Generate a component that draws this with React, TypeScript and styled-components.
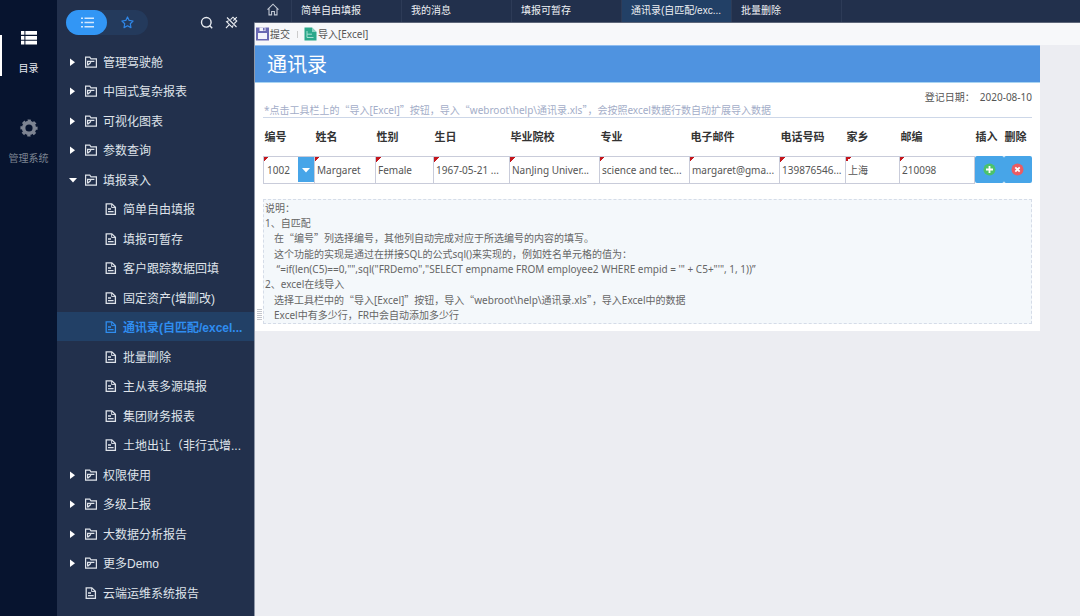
import React from 'react';
import styled, { createGlobalStyle, css } from 'styled-components';

const cjk = '"Noto Sans CJK SC"';

const GlobalStyle = createGlobalStyle`
  *, *::before, *::after { box-sizing: border-box; }
  body {
    margin: 0;
    background: #ecedf2;
    font-family: "Noto Sans", ${cjk}, sans-serif;
    font-size: 10px;
    color: #555;
  }
  button, input, select { font: inherit; color: inherit; margin: 0; padding: 0; border: 0; background: none; }
  ul, p, h1 { margin: 0; padding: 0; }
  ul { list-style: none; }
  a { color: inherit; text-decoration: none; }
  svg { display: block; flex: none; }
`;

const Shell = styled.div`
  display: flex;
  min-height: 100vh;
`;

const Rail = styled.nav`
  flex: none;
  width: 57px;
  padding-top: 28px;
  background: #07142f;
  display: flex;
  flex-direction: column;
  gap: 37px;
`;

const RailButton = styled.button<{ $active?: boolean }>`
  display: flex;
  flex-direction: column;
  align-items: center;
  gap: 13px;
  height: 53px;
  padding-top: 1px;
  line-height: 16px;
  color: ${p => (p.$active ? '#e6e9ef' : '#7d8492')};
  border-left: 2px solid transparent;
  border-right: 2px solid transparent;
  ${p => p.$active && css`
    background: linear-gradient(#fff, #fff) left 7px / 2px 41px no-repeat border-box;
  `}
`;

const Sidebar = styled.aside`
  flex: none;
  width: 197px;
  background: #22304c;
  font-family: "Liberation Sans", ${cjk}, sans-serif;
  color: #dfe3ea;
`;

const SidebarHead = styled.div`
  display: flex;
  align-items: center;
  padding: 10px 16px 0 9px;
  height: 35px;
`;

const Switcher = styled.div`
  display: flex;
  width: 82px;
  height: 25px;
  border-radius: 13px;
  background: #243a5c;
  margin-right: auto;
`;

const SwitchButton = styled.button<{ $active?: boolean }>`
  flex: 1;
  display: flex;
  align-items: center;
  justify-content: center;
  border-radius: 13px;
  color: ${p => (p.$active ? '#d5e8fd' : '#2f86e6')};
  background: ${p => (p.$active ? '#3296f5' : 'transparent')};
`;

const IconButton = styled.button`
  margin-left: 12px;
  color: #e8ebf0;
`;

const Tree = styled.ul`
  padding-top: 12px;
`;

const TreeItem = styled.li`
  &:nth-child(even) { margin-bottom: 1px; }
`;

const TreeLink = styled.a<{ $child?: boolean; $active?: boolean }>`
  display: flex;
  align-items: center;
  height: 29px;
  padding-left: ${p => (p.$child ? 48 : 12)}px;
  font-size: 12px;
  white-space: nowrap;
  ${p => p.$active && css`
    background: #224066;
    color: #2f8df0;
    font-weight: bold;
  `}
`;

const ArrowSlot = styled.span`
  width: 16px;
`;

const TreeLabel = styled.span`
  margin-left: 6px;
`;

const Main = styled.main`
  flex: 1;
  min-width: 0;
  border-left: 1px solid #8f98a9;
  position: relative;
`;

const TabBar = styled.nav`
  display: flex;
  height: 23px;
  margin-left: -1px;
  background: #22304c;
  border-bottom: 1px solid #5d6679;
  font-family: "Liberation Sans", ${cjk}, sans-serif;
  color: #eef0f4;
`;

const Tab = styled.a<{ $active?: boolean; $home?: boolean }>`
  display: flex;
  align-items: center;
  justify-content: ${p => (p.$home ? 'center' : 'flex-start')};
  width: ${p => (p.$home ? 38 : 110)}px;
  padding: 0 0 3px ${p => (p.$home ? 0 : 9)}px;
  white-space: nowrap;
  border-right: 1px solid #2d3b57;
  background: ${p => (p.$active ? '#224066' : 'transparent')};
`;

const Toolbar = styled.div`
  display: flex;
  align-items: center;
  height: 22px;
  padding-left: 1px;
  background: #f7f8fa;
`;

const ToolButton = styled.button`
  display: flex;
  align-items: center;
  gap: 1px;
  line-height: 14px;
`;

const ToolDivider = styled.span`
  width: 1px;
  height: 7px;
  margin: 0 6px 0 7px;
  background: #ccc;
`;

const Sheet = styled.section`
  max-width: 785px;
  padding-bottom: 7px;
  background: #fff;
`;

const Title = styled.h1`
  height: 38px;
  padding-left: 12px;
  background: #4f93e0;
  border-top: 1px solid #8fbdf0;
  border-bottom: 1px solid #a9d4f2;
  color: #fff;
  font-size: 20px;
  font-weight: normal;
  line-height: 38px;
`;

const Body = styled.div`
  padding: 7px 8px 0;
`;

const DateLine = styled.p`
  display: flex;
  justify-content: flex-end;
  gap: 5px;
  line-height: 14px;
`;

const Hint = styled.p`
  height: 14px;
  padding-left: 1px;
  border-bottom: 1px solid #cdd7e8;
  line-height: 13px;
  color: #a3adc8;
  white-space: nowrap;
`;

const Cjk = styled.span`
  font-family: ${cjk}, sans-serif;
  line-height: 1;
`;

const Grid = styled.table`
  width: calc(100% - 1px);
  table-layout: fixed;
  border-collapse: collapse;

  th {
    height: 38px;
    padding: 0 0 0 1px;
    font-size: 11px;
    line-height: 16px;
    color: #333;
    text-align: left;
    white-space: nowrap;
  }
`;

const Cell = styled.td`
  height: 27px;
  padding: 0;
  border: 1px solid #c9ccda;
  background: linear-gradient(135deg, #c4161c 50%, transparent 50%) left top / 5px 5px no-repeat;
`;

const ActionCell = styled.td`
  padding: 0;
`;

const Field = styled.input`
  display: block;
  width: 100%;
  height: 25px;
  padding-left: 2px;
`;

const SelectBox = styled.label`
  display: grid;
  grid-template-columns: 1fr 16px;
`;

const Select = styled.select`
  grid-area: 1 / 1 / 2 / 3;
  appearance: none;
  height: 25px;
  padding-left: 3px;
`;

const SelectArrow = styled.span`
  grid-area: 1 / 2;
  display: flex;
  align-items: center;
  justify-content: center;
  background: #47a5e8;
  pointer-events: none;
`;

const ActionButton = styled.button`
  display: flex;
  align-items: center;
  justify-content: center;
  width: 100%;
  height: 27px;
  border-radius: 2px;
  background: #47a5e8;
`;

const Notes = styled.div`
  margin-top: 15px;
  padding: 1px 1px 0;
  height: 125px;
  border: 1px dashed #d5dce8;
  background: #f4f8fb;
  line-height: 15px;
  color: #666;
  white-space: pre;
`;

const NoteGroup = styled.div`
  margin-bottom: 1px;
`;

const NoteLine = styled.p<{ $indent?: boolean }>`
  height: 15px;
  padding-left: ${p => (p.$indent ? 9 : 0)}px;
`;

const Grip = styled.div`
  position: absolute;
  left: 2px;
  top: 309px;
  width: 5px;
  height: 11px;
  background: repeating-linear-gradient(#c3c6cc 0 1px, transparent 1px 2px);
`;

const ListIcon = () => (
  <svg width="14" height="11" viewBox="0 0 14 11" fill="currentColor">
    <path d="M1 .5h2v1.500H1zM4.500 .5H14v1.500H4.500zM1 4.700h2v1.500H1zM4.500 4.700H14v1.500H4.500zM1 9h2v1.500H1zM4.500 9H14v1.500H4.500z" />
  </svg>
);

const CatalogIcon = () => (
  <svg width="18" height="18" viewBox="0 0 18 18" fill="#fff">
    <path d="M1 2h3.4v3.8H1zM5.4 2H17v3.8H5.4zM1 6.9h3.4v3.8H1zM5.4 6.9H17v3.8H5.4zM1 11.8h3.4v3.8H1zM5.4 11.8H17v3.8H5.4z" />
  </svg>
);

const GearIcon = () => (
  <svg width="18" height="18" viewBox="0 0 18 18" fill="none" stroke="#7d8492">
    <circle cx="9" cy="9" r="5.4" strokeWidth="3.6" />
    <circle cx="9" cy="9" r="7.6" strokeWidth="2" strokeDasharray="3.3 2.67" strokeDashoffset="1.6" />
  </svg>
);

const StarIcon = () => (
  <svg width="13" height="13" viewBox="0 0 14 14" fill="none" stroke="currentColor" strokeWidth="1.3" strokeLinejoin="round">
    <path d="M7 1l1.8 3.8 4.2.6-3 2.9.7 4.2L7 10.5l-3.7 2 .7-4.2-3-2.9 4.2-.6z" />
  </svg>
);

const SearchIcon = () => (
  <svg width="13" height="13" viewBox="0 0 13 13" fill="none" stroke="currentColor" strokeWidth="1.4">
    <circle cx="6.3" cy="6.3" r="4.8" />
    <path d="M9.6 9.6l2.6 2.6" />
  </svg>
);

const UnpinIcon = () => (
  <svg width="13" height="13" viewBox="0 0 13 13" fill="none" stroke="currentColor" strokeWidth="1.1">
    <path d="M2 1.5l9.5 9.5M5.5 3.7L8 1.2l3.8 3.8-2.5 2.5M3.7 4.8L1.6 5.7l5.7 5.7.9-2.1M4.3 8.7L1 12M8.3 4.7l3.5-3.5" />
  </svg>
);

const FolderIcon = () => (
  <svg width="12" height="12" viewBox="0 0 12 12" fill="none" stroke="currentColor" strokeWidth="1.2">
    <path d="M.6 11.2V1.2h4.2l1.2 1.6h5.4v8.4zM2.600 9.500V5.4h3M5.6 5.4h3.8M3 9l3-2.8" />
  </svg>
);

const FileIcon = () => (
  <svg width="12" height="12" viewBox="0 0 12 12" fill="none" stroke="currentColor" strokeWidth="1.3">
    <path d="M1.2 .8h5.6l3.6 3.5v7H1.2zM3 6h3M3 8.7h5.6" />
    <path d="M6.6 1v3.5h3.6" strokeWidth=".9" />
  </svg>
);

const HomeIcon = () => (
  <svg width="12" height="13" viewBox="0 0 12 13" fill="none" stroke="#c3c9d4" strokeWidth="1.1">
    <path d="M.5 6.6L6 1.2l5.5 5.4M2 5.5v6.4h2.6V8.5h2.8v3.4H10V5.5" />
  </svg>
);

const Caret = ({ open }: { open?: boolean }) => (
  <svg width="8" height="8" viewBox="0 0 8 8" fill="#fff">
    <path d={open ? 'M0 2h8L4 6.5z' : 'M1 .5v7.500L6 4.200z'} />
  </svg>
);

const SaveIcon = () => (
  <svg width="13" height="14" viewBox="0 0 13 14">
    <path d="M0 .5h13v13H0z" fill="#6a69b3" />
    <path d="M2 6h9v6H2z" fill="#f4f4fb" />
    <path d="M3.5.5h6v3.500h-6z" fill="#f4f4fb" />
    <path d="M7 1h1.6v2.5H7z" fill="#6a69b3" />
  </svg>
);

const ExcelIcon = () => (
  <svg width="13" height="14" viewBox="0 0 13 14">
    <path d="M.5.5H8L12.5 5v8.5H.5z" fill="#2ba88a" />
    <path d="M8 .5V5h4.5z" fill="#8fd3c2" />
    <path d="M3 4v6.5h6.5M3 7.2h5" stroke="#a6e0d0" fill="none" />
  </svg>
);

const RoundIcon = ({ remove }: { remove?: boolean }) => (
  <svg width="13" height="13" viewBox="0 0 13 13">
    <circle cx="6.5" cy="6.5" r="6" fill={remove ? '#ea5c62' : '#4cc26b'} />
    <path
      d={remove ? 'M4.3 4.3l4.4 4.4M8.7 4.3L4.3 8.7' : 'M6.5 3v7M3 6.5h7'}
      stroke="#fff"
      strokeWidth="1.8"
    />
  </svg>
);

type TreeNode = { label: string; kind: 'folder' | 'open' | 'child' | 'file'; active?: boolean };

const nodes: TreeNode[] = [
  { label: '管理驾驶舱', kind: 'folder' },
  { label: '中国式复杂报表', kind: 'folder' },
  { label: '可视化图表', kind: 'folder' },
  { label: '参数查询', kind: 'folder' },
  { label: '填报录入', kind: 'open' },
  { label: '简单自由填报', kind: 'child' },
  { label: '填报可暂存', kind: 'child' },
  { label: '客户跟踪数据回填', kind: 'child' },
  { label: '固定资产(增删改)', kind: 'child' },
  { label: '通讯录(自匹配/excel...', kind: 'child', active: true },
  { label: '批量删除', kind: 'child' },
  { label: '主从表多源填报', kind: 'child' },
  { label: '集团财务报表', kind: 'child' },
  { label: '土地出让（非行式增...', kind: 'child' },
  { label: '权限使用', kind: 'folder' },
  { label: '多级上报', kind: 'folder' },
  { label: '大数据分析报告', kind: 'folder' },
  { label: '更多Demo', kind: 'folder' },
  { label: '云端运维系统报告', kind: 'file' },
];

const tabs = ['简单自由填报', '我的消息', '填报可暂存', '通讯录(自匹配/exc...', '批量删除'];

const columns = [
  { title: '编号', width: 51 },
  { title: '姓名', width: 61, value: 'Margaret' },
  { title: '性别', width: 58, value: 'Female' },
  { title: '生日', width: 76, value: '1967-05-21 ...' },
  { title: '毕业院校', width: 90, value: 'NanJing Univer...' },
  { title: '专业', width: 90, value: 'science and tec...' },
  { title: '电子邮件', width: 90, value: 'margaret@gma...' },
  { title: '电话号码', width: 66, value: '139876546...' },
  { title: '家乡', width: 54, value: '上海' },
  { title: '邮编', width: 75, value: '210098' },
  { title: '插入', width: 29 },
  { title: '删除', width: 28 },
];

const Quoted = ({ children }: { children: React.ReactNode }) => (
  <><Cjk>“</Cjk>{children}<Cjk>”</Cjk></>
);

export default function App() {
  return (
    <Shell>
      <GlobalStyle />
      <Rail>
        <RailButton $active><CatalogIcon />目录</RailButton>
        <RailButton><GearIcon />管理系统</RailButton>
      </Rail>
      <Sidebar>
        <SidebarHead>
          <Switcher>
            <SwitchButton $active aria-label="目录"><ListIcon /></SwitchButton>
            <SwitchButton aria-label="收藏"><StarIcon /></SwitchButton>
          </Switcher>
          <IconButton aria-label="搜索"><SearchIcon /></IconButton>
          <IconButton aria-label="取消固定"><UnpinIcon /></IconButton>
        </SidebarHead>
        <Tree>
          {nodes.map(n => (
            <TreeItem key={n.label}>
              <TreeLink href="#" $child={n.kind === 'child'} $active={n.active}>
                {n.kind !== 'child' && (
                  <ArrowSlot>{n.kind !== 'file' && <Caret open={n.kind === 'open'} />}</ArrowSlot>
                )}
                {n.kind === 'folder' || n.kind === 'open' ? <FolderIcon /> : <FileIcon />}
                <TreeLabel>{n.label}</TreeLabel>
              </TreeLink>
            </TreeItem>
          ))}
        </Tree>
      </Sidebar>
      <Main>
        <TabBar>
          <Tab href="#" $home aria-label="首页"><HomeIcon /></Tab>
          {tabs.map((t, i) => <Tab href="#" key={t} $active={i === 3}>{t}</Tab>)}
        </TabBar>
        <Toolbar>
          <ToolButton><SaveIcon />提交</ToolButton>
          <ToolDivider />
          <ToolButton><ExcelIcon />导入[Excel]</ToolButton>
        </Toolbar>
        <Sheet>
          <Title>通讯录</Title>
          <Body>
            <DateLine><span>登记日期：</span><span>2020-08-10</span></DateLine>
            <Hint>
              *点击工具栏上的<Quoted>导入[Excel]</Quoted>按钮，导入<Quoted>webroot\help\通讯录.xls</Quoted>，会按照excel数据行数自动扩展导入数据
            </Hint>
            <Grid>
              <colgroup>
                {columns.map(c => <col key={c.title} width={c.width} />)}
              </colgroup>
              <thead>
                <tr>{columns.map(c => <th key={c.title} scope="col">{c.title}</th>)}</tr>
              </thead>
              <tbody>
                <tr>
                  <Cell>
                    <SelectBox>
                      <Select aria-label="编号" defaultValue="1002"><option>1002</option></Select>
                      <SelectArrow>
                        <Caret open />
                      </SelectArrow>
                    </SelectBox>
                  </Cell>
                  {columns.filter(c => c.value).map(c => (
                    <Cell key={c.title}><Field aria-label={c.title} defaultValue={c.value} /></Cell>
                  ))}
                  <ActionCell><ActionButton aria-label="插入"><RoundIcon /></ActionButton></ActionCell>
                  <ActionCell><ActionButton aria-label="删除"><RoundIcon remove /></ActionButton></ActionCell>
                </tr>
              </tbody>
            </Grid>
            <Notes>
              <NoteGroup>
                <NoteLine>说明：</NoteLine>
                <NoteLine>1、自匹配</NoteLine>
                <NoteLine $indent>在<Quoted>编号</Quoted>列选择编号，其他列自动完成对应于所选编号的内容的填写。</NoteLine>
              </NoteGroup>
              <NoteGroup>
                <NoteLine $indent>这个功能的实现是通过在拼接SQL的公式sql()来实现的，例如姓名单元格的值为：</NoteLine>
                <NoteLine $indent>
                  {` “=if(len(C5)==0,"",sql("FRDemo","SELECT empname FROM employee2 WHERE empid = '" + C5+"'", 1, 1))”`}
                </NoteLine>
                <NoteLine>2、excel在线导入</NoteLine>
              </NoteGroup>
              <NoteGroup>
                <NoteLine $indent>选择工具栏中的<Quoted>导入[Excel]</Quoted>按钮，导入<Quoted>webroot\help\通讯录.xls</Quoted>，导入Excel中的数据</NoteLine>
                <NoteLine $indent>Excel中有多少行，FR中会自动添加多少行</NoteLine>
              </NoteGroup>
            </Notes>
          </Body>
        </Sheet>
        <Grip />
      </Main>
    </Shell>
  );
}
